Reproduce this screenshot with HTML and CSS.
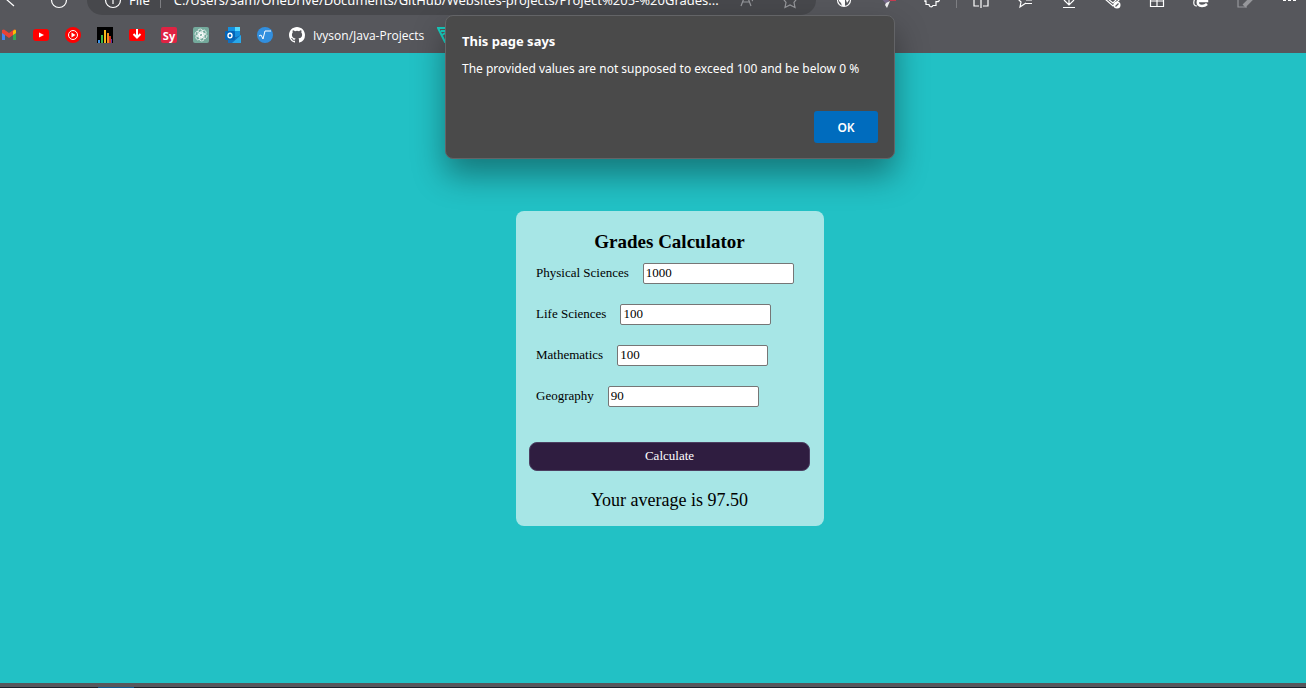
FILE: index.html
```html
<!DOCTYPE html>
<html lang="en">
<head>
<meta charset="utf-8">
<meta name="viewport" content="width=device-width, initial-scale=1">
<title>Grades Calculator</title>
<link rel="stylesheet" href="styles.css">
</head>
<body>
<header class="browser">
  <div class="toolbar">
    <div class="toolbar-row">
      <button class="tool back" aria-label="Back"><svg width="16" height="16" viewBox="0 0 16 16"><path d="M11 2 3 7l8 7"/></svg></button>
      <button class="tool" aria-label="Refresh"><svg width="18" height="18" viewBox="0 0 18 18"><circle cx="9" cy="9" r="7.5"/></svg></button>
      <div class="address">
        <svg class="info" width="18" height="18" viewBox="0 0 18 18"><circle cx="9" cy="9" r="7.5"/><path d="M9 8v5"/></svg>
        <span class="scheme">File</span>
        <span class="bar"></span>
        <span class="url">C:/Users/Sam/OneDrive/Documents/GitHub/Websites-projects/Project%205-%20Grades...</span>
        <button class="tool dim" aria-label="Read aloud"><svg width="18" height="18" viewBox="0 0 18 18"><path d="M4 15 9 2l5 13M6 11h6M15 8q1 1 0 2"/></svg></button>
        <button class="tool dim" aria-label="Add to favorites"><svg width="18" height="18" viewBox="0 0 18 18"><path d="m9 2 2 5 5 .5-3 4 1 5-5-2.500L4 16.500l1-5-3-4 5-.5z"/></svg></button>
      </div>
      <button class="tool" aria-label="Extension globe"><svg width="16" height="16" viewBox="0 0 16 16"><circle cx="8" cy="8" r="6.500"/><path fill="#fff" stroke="none" d="M3 3h4v4l2 1v6H6L5 11 3 9zM9 3h4v5l-2 3-1-3z"/></svg></button>
      <button class="tool" aria-label="Extension quill"><svg width="18" height="18" viewBox="0 0 18 18"><path fill="#77698a" stroke="none" d="M2 7h9l-3 7z"/><path fill="#eee" stroke="none" d="m7 12 4-2-3 7-2-3z"/><path fill="#c43c50" stroke="none" d="M8 6h9v4h-6z"/></svg></button>
      <button class="tool" aria-label="Extensions"><svg width="18" height="18" viewBox="0 0 18 18"><path d="M2 3h4q0-3 3-2 2 0 1.500 2H14v4h1q2 1 1 3-1 1-3 .5v4h-3q-1 2-3 1-1-1-1-2H3v-3H2V9q3 0 2-2H2z"/></svg></button>
      <span class="bar"></span>
      <button class="tool" aria-label="Split screen"><svg width="18" height="18" viewBox="0 0 18 18"><path d="M9 1v16M7 3H2v12h5M11 3h5v12h-5"/></svg></button>
      <button class="tool" aria-label="Favorites"><svg width="18" height="18" viewBox="0 0 18 18"><path d="M7 2 5 7H1l4 4-1 5 6-4M10 9h6M9 12.500h7"/></svg></button>
      <button class="tool" aria-label="Downloads"><svg width="18" height="18" viewBox="0 0 18 18"><path d="M9 2v11M4 9l5 5 5-5M3 16.500h12"/></svg></button>
      <button class="tool" aria-label="Performance"><svg width="18" height="18" viewBox="0 0 18 18"><path d="m1 8 8 7 7-7M4 8l5 4 4-4"/><circle cx="13" cy="14" r="3.500" fill="#fff" stroke="none"/><path stroke="#56575c" d="m11.500 15.500 3-3"/></svg></button>
      <button class="tool" aria-label="Apps"><svg width="18" height="18" viewBox="0 0 18 18"><path d="M2.500 2.500h13v13h-13zM9 3v12M3 10h12"/></svg></button>
      <button class="tool" aria-label="Internet Explorer mode"><svg width="18" height="18" viewBox="0 0 18 18"><path d="M4 3 2 10q-1 5 3 5"/><path stroke-width="2.500" d="M7 10h8q0-5-4-5T6 10t4 5q3 0 5-2"/></svg></button>
      <button class="tool dim" aria-label="Edit"><svg width="18" height="18" viewBox="0 0 18 18"><path d="M12 3H2v13h9"/><path d="m8 15 8-8" stroke-width="4"/></svg></button>
      <button class="tool more" aria-label="Settings and more"><svg width="18" height="18" viewBox="0 0 18 18"><path fill="#fff" stroke="none" d="M3 8h3v2H3zM8 8h3v2H8zM13 8h3v2h-3z"/></svg></button>
    </div>
  </div>
  <nav class="bookmarks" aria-label="Favorites bar">
    <a href="#" aria-label="Gmail"><svg width="16" height="16" viewBox="0 0 16 16"><path fill="#4285f4" d="M1 4v9h3V6z"/><path fill="#34a853" d="M12 6v7h3V4z"/><path fill="#ea4335" d="m1 3 2-.5L8 6l5-3.500 2 .5v3l-7 5-7-5z"/><path fill="#fbbc04" d="m12 4 2-1.500 1 1V6l-3 2z"/><path fill="#56575c" d="m4 8.500 4 3 4-3V14H4z"/></svg></a>
    <a href="#" aria-label="YouTube"><svg width="16" height="16" viewBox="0 0 16 16"><rect y="2" width="16" height="12" rx="3" fill="#f00"/><path fill="#fff" d="m6 5.500 5 2.500-5 2.500z"/></svg></a>
    <a href="#" aria-label="YouTube Music"><svg width="16" height="16" viewBox="0 0 16 16"><circle cx="8" cy="8" r="8" fill="#f00"/><circle cx="8" cy="8" r="4.500" fill="none" stroke="#fff"/><path fill="#fff" d="m6.500 5.500 4 2.500-4 2.500z"/></svg></a>
    <a href="#" aria-label="Equalizer"><svg width="16" height="16" viewBox="0 0 16 16"><path d="M0 0h16v16H0z"/><path fill="#3a91e8" d="M1 13h2v3H1z"/><path fill="#39b54a" d="M4 8h2v8H4z"/><path fill="#f5b719" d="M7 3h2v13H7z"/><path fill="#f28b1c" d="M10 6h2v10h-2z"/><path fill="#c83220" d="M12 9h2v7h-2z"/><path fill="#6631a0" d="M14 12h1v4h-1z"/></svg></a>
    <a href="#" aria-label="Video downloader"><svg width="16" height="16" viewBox="0 0 16 16"><rect y="2" width="16" height="12" rx="2" fill="#f00"/><path fill="none" stroke="#fff" stroke-width="2" d="M8 2v8M4.500 7 8 10.500 11.500 7"/></svg></a>
    <a href="#" class="sy">Sy</a>
    <a href="#" aria-label="ChatGPT"><svg width="16" height="16" viewBox="0 0 16 16"><rect width="16" height="16" rx="2" fill="#74aa9c"/><g fill="none" stroke="#fff" stroke-width=".7"><rect x="5" y="2" width="4.500" height="8" rx="2.200"/><rect x="5" y="2" width="4.500" height="8" rx="2.200" transform="rotate(60 8 8)"/><rect x="5" y="2" width="4.500" height="8" rx="2.200" transform="rotate(120 8 8)"/><rect x="5" y="2" width="4.500" height="8" rx="2.200" transform="rotate(180 8 8)"/><rect x="5" y="2" width="4.500" height="8" rx="2.200" transform="rotate(240 8 8)"/><rect x="5" y="2" width="4.500" height="8" rx="2.200" transform="rotate(300 8 8)"/></g></svg></a>
    <a href="#" aria-label="Outlook"><svg width="16" height="16" viewBox="0 0 16 16"><path fill="#1490df" d="M3 0h12v10H3z"/><path fill="#50d9ff" d="M10 0h5v4h-5z"/><path fill="#1170c0" d="m3 8 6 3 7-3v8H3z"/><path fill="#28a8ea" d="m16 8-9 8h9z"/><rect y="4" width="10" height="9" rx="1" fill="#0364b8"/><ellipse cx="5" cy="8.500" rx="2" ry="2.300" fill="none" stroke="#fff" stroke-width="1.400"/></svg></a>
    <a href="#" aria-label="Symbolab"><svg width="16" height="16" viewBox="0 0 16 16"><circle cx="8" cy="8" r="8" fill="#318fdf"/><path fill="none" stroke="#fff" d="m2 9 2-1 2 4 2-8h6"/></svg></a>
    <a href="#" class="labelled"><svg width="16" height="16" viewBox="0 0 16 16"><path fill="#fff" fill-rule="evenodd" d="M8 0C3.580 0 0 3.580 0 8c0 3.540 2.290 6.530 5.470 7.590.4.070.55-.17.55-.38 0-.19-.01-.82-.01-1.490-2.010.37-2.530-.49-2.690-.94-.09-.23-.48-.94-.82-1.130-.28-.15-.68-.52-.01-.53.63-.01 1.080.58 1.230.82.72 1.210 1.870.87 2.330.66.07-.52.28-.87.51-1.070-1.780-.2-3.640-.89-3.640-3.950 0-.87.31-1.590.82-2.150-.08-.2-.36-1.020.08-2.120 0 0 .67-.21 2.200.82a7.600 7.600 0 0 1 4 0c1.530-1.040 2.200-.82 2.200-.82.44 1.100.16 1.920.08 2.120.51.56.82 1.270.82 2.150 0 3.070-1.870 3.750-3.650 3.950.29.25.54.73.54 1.480 0 1.070-.01 1.930-.01 2.200 0 .21.15.46.55.38A8.010 8.010 0 0 0 16 8c0-4.420-3.580-8-8-8z"/></svg><span class="label">Ivyson/Java-Projects</span></a>
    <a href="#" aria-label="Triangle"><svg width="16" height="16" viewBox="0 0 16 16"><path fill="none" stroke="#16cfc0" stroke-width="2" d="M1 1h14L8 15zM4 4h8M5 8l5-3"/></svg></a>
  </nav>
</header>

<main class="page">
  <form class="card">
    <h1>Grades Calculator</h1>
    <div class="fields">
      <div class="field"><label for="physics">Physical Sciences</label><input id="physics" type="text" value="1000"></div>
      <div class="field"><label for="life">Life Sciences</label><input id="life" type="text" value="100"></div>
      <div class="field"><label for="maths">Mathematics</label><input id="maths" type="text" value="100"></div>
      <div class="field"><label for="geo">Geography</label><input id="geo" type="text" value="90"></div>
    </div>
    <button class="calculate" type="button">Calculate</button>
    <output class="result">Your average is 97.50</output>
  </form>
</main>

<footer class="edge"><div class="taskbar"><div class="active-task"></div></div></footer>

<section class="dialog" role="alertdialog" aria-labelledby="says" aria-describedby="message">
  <h2 id="says">This page says</h2>
  <p id="message">The provided values are not supposed to exceed 100 and be below 0 %</p>
  <button class="ok" type="button">OK</button>
</section>
</body>
</html>
```
FILE: styles.css
```css
* { box-sizing: border-box; }
html { height: 100%; }
body {
  position: relative;
  display: flex;
  flex-direction: column;
  min-height: 100%;
  margin: 0;
  overflow: hidden;
  background: #22c1c5;
  font-family: "Liberation Serif", serif;
}
button { border: 0; padding: 0; font: inherit; }

/* Browser frame */
.browser {
  background: #56575c;
  color: #fff;
  font-family: "Noto Sans", sans-serif;
}
.toolbar {
  display: flex;
  align-items: flex-end;
  height: 15px;
  overflow: hidden;
}
.toolbar-row {
  flex: 1;
  min-width: 0;
  display: flex;
  align-items: center;
  height: 30px;
}
.tool {
  flex: none;
  display: flex;
  align-items: center;
  justify-content: center;
  width: 44px;
  height: 30px;
  background: none;
}
.tool.back { width: 37px; padding-right: 15px; }
.tool.more { width: 39px; padding-left: 5px; }
.tool svg, .info { flex: none; fill: none; stroke: #fff; stroke-width: 1.2; }
.tool.dim svg { stroke: #96979b; }
.bar { flex: none; width: 1px; height: 16px; margin: 0 2px; background: #7d7e82; }
.address {
  flex: 1;
  min-width: 0;
  display: flex;
  align-items: center;
  height: 30px;
  margin: 0 6px;
  padding: 0 4px 0 17px;
  border-radius: 15px;
  background: #47484c;
  font-size: 13px;
}
.scheme { margin: 0 8px 0 7px; }
.url { flex: 1; min-width: 0; margin-left: 11px; white-space: nowrap; }

.bookmarks {
  display: flex;
  align-items: center;
  gap: 16px;
  height: 38px;
  padding: 2px 0 0 1px;
  font-size: 12px;
}
.bookmarks a { display: flex; flex: none; color: #fff; text-decoration: none; }
.bookmarks .labelled { align-items: center; gap: 8px; }
.bookmarks .label { width: 108px; font-family: "Open Sans", sans-serif; white-space: nowrap; }
.bookmarks .sy {
  align-items: center;
  justify-content: center;
  width: 16px;
  height: 16px;
  border-radius: 2px;
  background: #df2343;
  font-size: 11px;
  font-weight: 700;
}

/* Calculator */
.page {
  flex: 1;
  display: flex;
  align-items: center;
  justify-content: center;
  padding-left: 34px;
}
.card {
  display: flex;
  flex-direction: column;
  width: 308px;
  padding: 20px 14px 15px 13px;
  border-radius: 8px;
  background: #a7e6e6;
  color: #000;
}
.card h1 { margin: 0; font-size: 19px; line-height: 22px; text-align: center; }
.fields { display: grid; gap: 20px; margin: 10px 0 35px; padding-left: 7px; }
.field { display: flex; gap: 14px; height: 21px; font-size: 13px; line-height: 20px; }
.field input {
  width: 151px;
  padding: 0 2px;
  border: 1px solid #767676;
  border-radius: 2px;
  background: #fff;
  color: #000;
  font: 13px "Liberation Serif", serif;
}
.calculate {
  height: 29px;
  border: 1px solid #4c3f61;
  border-radius: 8px;
  background: #2f1d40;
  color: #fff;
  font-size: 13px;
}
.result { display: block; margin-top: 18px; font-size: 18px; line-height: 22px; text-align: center; }

/* Window bottom edge */
.edge { height: 5px; background: #56575c; padding-top: 4px; }
.taskbar { height: 1px; padding-left: 98px; background: #18202b; }
.active-task { width: 36px; height: 1px; background: #11588c; }

/* Alert */
.dialog {
  position: absolute;
  top: 15px;
  left: calc(50% + 17px);
  display: flex;
  flex-direction: column;
  width: 450px;
  margin-left: -225px;
  padding: 15px 16px;
  border: 1px solid #636467;
  border-radius: 8px;
  background: #4a4a4a;
  box-shadow: 0 16px 32px rgba(0, 0, 0, .38);
  color: #fff;
  font-family: "Noto Sans", sans-serif;
}
.dialog h2 { margin: 0; font-size: 13px; line-height: 20px; }
.dialog p { margin: 8px 0 32px; font-size: 12px; line-height: 20px; white-space: nowrap; }
.ok {
  align-self: flex-end;
  width: 64px;
  height: 32px;
  border-radius: 3px;
  background: #006cbe;
  color: #fff;
  font-size: 12px;
  font-weight: 600;
}
```
